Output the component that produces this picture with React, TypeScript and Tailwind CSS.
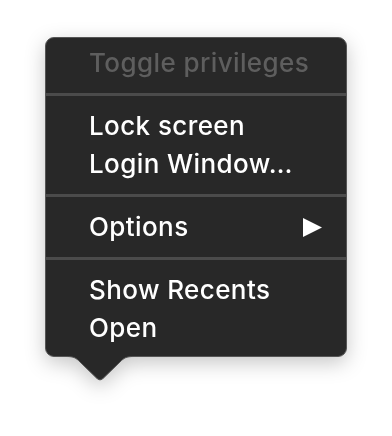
import React from "react";

const Row = ({ children, disabled }: { children: React.ReactNode; disabled?: boolean }) => (
  <div
    className={`h-[38px] leading-[38px] pl-[43px] pr-[24px] text-[26px] font-medium tracking-[0.4px] flex items-center justify-between ${
      disabled ? "text-[#5e5e5e]" : "text-white"
    }`}
  >
    {children}
  </div>
);

const Sep = () => <div className="h-[3px] my-[11px] bg-[#4b4b4b]" />;

export default function App() {
  return (
    <div
      className="w-[392px] h-[436px] bg-white pl-[45px] pt-[37px]"
      style={{ fontFamily: "Inter, 'Liberation Sans', sans-serif" }}
    >
      <div className="relative w-[302px] drop-shadow-[0_6px_10px_rgba(0,0,0,0.22)]">
        <div className="rounded-[9px] border border-[#565656] bg-[#282828] pt-[6px] pb-[9px]">
          <Row disabled>Toggle privileges</Row>
          <Sep />
          <Row>Lock screen</Row>
          <Row>Login Window…</Row>
          <Sep />
          <Row>
            <span>Options</span>
            <svg width="19" height="19" viewBox="0 0 19 19">
              <polygon points="0,0 19,9.5 0,19" fill="white" />
            </svg>
          </Row>
          <Sep />
          <Row>Show Recents</Row>
          <Row>Open</Row>
        </div>
        <svg
          className="absolute left-[21px] top-[100%] -mt-[2px]"
          width="68"
          height="27"
          viewBox="0 0 68 27"
        >
          <path
            d="M0,0 L68,0 L68,1.5 C60,1.5 58,3 54,7 L37,23.5 Q34,26.5 31,23.5 L14,7 C10,3 8,1.5 0,1.5 Z"
            fill="#282828"
          />
          <path
            d="M0,1.5 C8,1.5 10,3 14,7 L31,23.5 Q34,26.5 37,23.5 L54,7 C58,3 60,1.5 68,1.5"
            fill="none"
            stroke="#565656"
            strokeWidth="1"
          />
        </svg>
      </div>
    </div>
  );
}
